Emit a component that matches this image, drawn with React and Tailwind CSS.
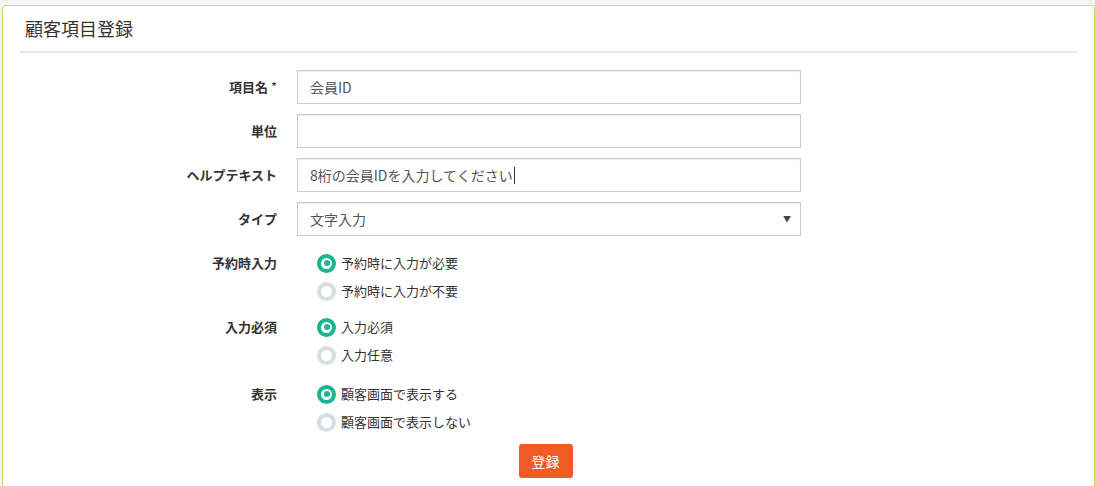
const font = {
  fontFamily: '"Noto Sans CJK JP", "Noto Sans", "Liberation Sans", sans-serif',
};

function TextRow({ label, required, value, caret }) {
  return (
    <div className="flex items-center h-[34px]">
      <label className="w-[277px] pr-[20px] text-right text-[13px] font-bold text-[#333]">
        {label}
        {required && <span className="ml-[3px] font-normal">*</span>}
      </label>
      <div className="w-[504px] h-[34px] border border-[#ccc] bg-white shadow-[inset_0_1px_1px_rgba(0,0,0,0.075)] flex items-center px-[12px] text-[14px] text-[#555]">
        {value}
        {caret && <span className="ml-[1px] inline-block w-[1px] h-[17px] bg-[#333]" />}
      </div>
    </div>
  );
}

function Radio({ checked, children }) {
  return (
    <div className="flex items-center h-[28px]">
      {checked ? (
        <span className="w-[19px] h-[19px] rounded-full border-[4px] border-[#1ab394] flex items-center justify-center">
          <span className="w-[6px] h-[6px] rounded-full bg-[#1ab394]" />
        </span>
      ) : (
        <span className="w-[19px] h-[19px] rounded-full border-[4px] border-[#d8dde0]" />
      )}
      <span className="ml-[5px] text-[13px] text-[#333]">{children}</span>
    </div>
  );
}

function RadioGroup({ label, options, className }) {
  return (
    <div className={"flex " + className}>
      <label className="w-[277px] pr-[20px] text-right text-[13px] font-bold text-[#333] h-[28px] flex items-center justify-end">
        {label}
      </label>
      <div className="pl-[20px]">
        <Radio checked>{options[0]}</Radio>
        <Radio>{options[1]}</Radio>
      </div>
    </div>
  );
}

export default function App() {
  return (
    <div className="min-h-[486px] bg-[#f5f5f5] pt-[5px] pl-[2px]" style={font}>
      <div className="bg-white border border-[#c9dc5c] rounded-[4px] w-[1093px] h-[490px] px-[17px]">
        <div className="h-[47px] flex items-center pl-[5px] border-b-2 border-[#e6e9ed] w-[1058px]">
          <h1 className="text-[18px] text-[#333] font-normal">顧客項目登録</h1>
        </div>

        <div className="pt-[17px] flex flex-col gap-[10px]">
          <TextRow label="項目名" required value="会員ID" />
          <TextRow label="単位" value="" />
          <TextRow label="ヘルプテキスト" value="8桁の会員IDを入力してください" caret />
          <div className="flex items-center h-[34px]">
            <label className="w-[277px] pr-[20px] text-right text-[13px] font-bold text-[#333]">
              タイプ
            </label>
            <div className="w-[504px] h-[34px] border border-[#ccc] bg-white shadow-[inset_0_1px_1px_rgba(0,0,0,0.075)] flex items-center justify-between px-[12px] text-[14px] text-[#555]">
              <span>文字入力</span>
              <span className="text-[8px] text-[#444] mr-[-3px]">▼</span>
            </div>
          </div>
        </div>

        <RadioGroup
          className="mt-[13px]"
          label="予約時入力"
          options={["予約時に入力が必要", "予約時に入力が不要"]}
        />
        <RadioGroup
          className="mt-[8px]"
          label="入力必須"
          options={["入力必須", "入力任意"]}
        />
        <RadioGroup
          className="mt-[11px]"
          label="表示"
          options={["顧客画面で表示する", "顧客画面で表示しない"]}
        />

        <div className="mt-[8px] flex justify-center pr-[6px]">
          <button className="w-[54px] h-[34px] rounded-[3px] bg-[#f15a24] text-white text-[14px]">
            登録
          </button>
        </div>
      </div>
    </div>
  );
}
